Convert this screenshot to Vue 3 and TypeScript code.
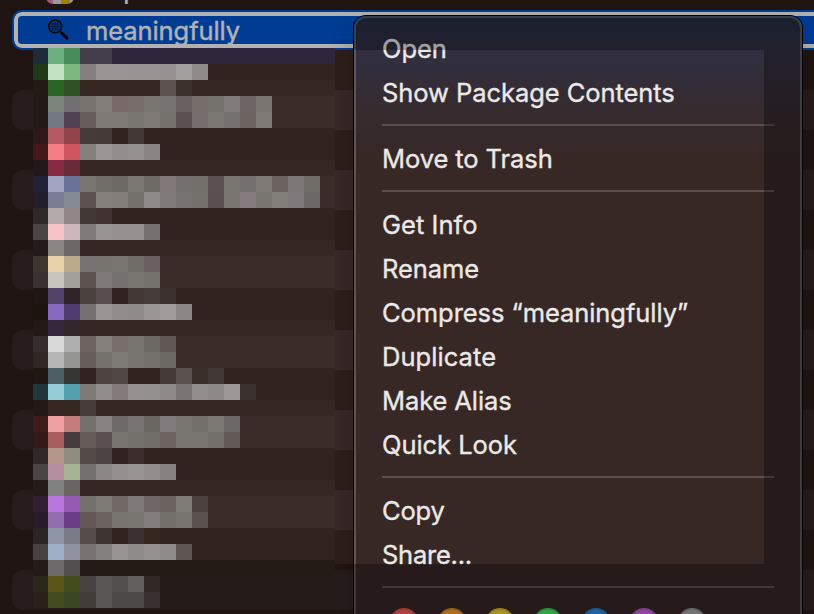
<script setup lang="ts">
interface MenuItem {
  label: string
  tracking: number
}

interface MosaicRow {
  base: string
  cells: string[]
}

const rows = Array.from({ length: 14 }, (_, i) => ({ striped: i % 2 === 1 }))

const groups: MenuItem[][] = [
  [
    { label: 'Open', tracking: -0.1 },
    { label: 'Show Package Contents', tracking: -0.06 },
  ],
  [{ label: 'Move to Trash', tracking: -0.08 }],
  [
    { label: 'Get Info', tracking: 0.04 },
    { label: 'Rename', tracking: -0.1 },
    { label: 'Compress “meaningfully”', tracking: -0.06 },
    { label: 'Duplicate', tracking: 0.06 },
    { label: 'Make Alias', tracking: -0.1 },
    { label: 'Quick Look', tracking: -0.05 },
  ],
  [
    { label: 'Copy', tracking: -0.2 },
    { label: 'Share...', tracking: -0.25 },
  ],
]

const tags = ['red', 'orange', 'yellow', 'green', 'blue', 'purple', 'gray']

// Each line: row base colour, then cell colours from the left; "-" leaves the base visible.
const mosaicSource = `
2f263e 1e2b3b 6daf80 478c59 433e4a 433e4a
32231f 1f3918 c2e2c3 7bb77e 858080 9a9594 9a9594 989392 999493 979291 a29e9d 908c8a
372723 231a16 2b6526 305025 - - - - - 5d5452 3c312d
3b2b29 231a18 7b857b 716f71 797370 827d79 786a69 786d6a 7a7672 767270 696060 776d6b 74726c 817b7b 6e6463 7c7673
3b2b29 231a18 727982 4f4052 675d5b 7f7a75 7e7974 7a7671 7f7a76 75716d 5c5150 766c6b 7b7773 75716e 6d6361 7f7a75
32221f 2f1819 b35a62 93434a 453c39 433a38 - 433836
32221f 46171a f48086 ce545e 84807e 9c9796 928e8c 959190 888482
352622 231819 872b43 692b3a
3b2b29 222139 a2a5c1 69739a 7a7473 716d69 6d6965 7b7772 6e6b67 807879 74706d 736f6b 5c5150 7a7671 74706d 7e7975 6c6260 7e7778 706d69
3b2b29 231e2b 777e95 858b93 5d5250 85807b 827d78 74706c 8e8a88 817a7b 76726f 74706c 5b504f 7b7672 847c7e 797571 817d78 7f787a 6c6865
32221f 2e2926 b5aaaa 928686 423936 413331
32221f 494543 f6c1c7 ccb8bb 7e7b78 979392 959190 959190 767070
352622 231b19 8a8684 6d6666
3b2b29 3f362f e8d2ac baab8b 787272 77736f 7a7671 706d69 6b605f
3b2b29 3a3230 c8c4be a2a09a 5d5250 7f7979 75716e 7a7671 75716d
32221f 201714 53426a 312429 4b4240 594e4d - 423936 463d3b 3c312f
32221f 1e140f 8769c0 503c70 777070 9a9594 918d8c 8e8b89 9b9796 a19c9b 8c8786
352622 231816 37273e 33262a
3b2b29 352d2b dadada afafaf 6e6361 85807b 7a6e6c 787470 6c6864 605654
3b2b29 312725 b6b6b6 949492 675d5b 75716d 7d7974 787470 74706c 6b6864
32221f 201612 4d5f65 363734 - 4d4442 524947 - - 433a37 5b5250 3a2e2a 423835
32221f 1f363b 95cbd6 54a0af 7d7977 918d8b 837b7b 959190 939190 8e8a88 7b7474 928e8c 8c8886 9d9897 3c3230
352622 231816 - - 483d3a
3b2b29 3f1b19 f1a0a0 c47c7c 74706c 898282 6f6b68 787471 6a6662 827b7d 797571 736f6b 7c7874 6c6865
3b2b29 331917 a85c5b 473c3e 645a58 5b504f 787470 74706c 716d69 6e6361 7a7672 7a7672 736f6b 635957
32221f 302726 b69689 8f8c80 544a48 4d4343 - 3a2d2b
32221f 494543 b58fa0 a7b493 757070 8b8785 94908f 979392 928e8d 858280
352622 251b19 828282 6a6463
3b2b29 331f33 b977dd 965bb2 74716d 7e7a75 726866 7f7979 706665 6c6260 7f7b76 4b403e
3b2b29 2a1b2a 926eb0 6a3b87 625957 6b615f 787470 7a7671 827c7d 736f6b 787470 5b5250
32221f 2b2624 8f95a9 797b87 554b49 3e3432 - 3b3231 35261f
32221f 454240 9eafc9 9092a0 777170 84807e 979391 908c8a 959190 908c8a 5f5654
251b16 231b18 6e6c6b 51504e
251b19 2b2819 5b5519 424c1d 474241 595655 524f4d 635f5e 312725
251b19 2a2019 434b1e 3a4624 433d3a 595655 4c4a48 4c4a48 383130`

const mosaic: MosaicRow[] = mosaicSource
  .trim()
  .split('\n')
  .map((line) => {
    const [base, ...cells] = line.split(' ')
    return {
      base: '#' + base,
      cells: cells.map((c) => (c === '-' ? 'transparent' : '#' + c)),
    }
  })
</script>

<template>
  <main class="window">
    <section class="list">
      <div class="row first">
        <span class="app-icon"></span>
        <span class="name">Maps</span>
      </div>
      <div class="row selected">
        <svg class="glass" viewBox="0 0 24 24" width="24" height="24" fill="none">
          <path d="M12.6 12.8 L15.5 15.7" stroke="#000" stroke-width="1.8" />
          <path d="M15.4 15.6 L20 20" stroke="#000" stroke-width="3" stroke-linecap="round" />
          <circle cx="8.2" cy="8.4" r="6.4" fill="#0a52b8" stroke="#000" stroke-width="1.5" />
          <path
            d="M5.8 4.4v8M8.2 3.6v9.6M10.6 4.4v8M4.2 6h8M3.4 8.4h9.6M4.2 10.8h8"
            stroke="#06203f"
            stroke-width="0.7"
          />
        </svg>
        <span class="name">meaningfully</span>
      </div>
      <div v-for="(row, i) in rows" :key="i" class="row" :class="{ striped: row.striped }"></div>
    </section>

    <nav class="menu">
      <template v-for="(group, g) in groups" :key="g">
        <ul class="group">
          <li v-for="item in group" :key="item.label" class="item">
            <span :style="{ letterSpacing: item.tracking + 'px' }">{{ item.label }}</span>
          </li>
        </ul>
        <div class="separator"></div>
      </template>
      <div class="tags">
        <span v-for="tag in tags" :key="tag" class="tag" :class="tag"></span>
      </div>
    </nav>

    <div class="spotlight"></div>

    <div class="mosaic">
      <div v-for="(line, i) in mosaic" :key="i" class="line" :style="{ background: line.base }">
        <i v-for="(cell, j) in line.cells" :key="j" :style="{ background: cell }"></i>
      </div>
    </div>
  </main>
</template>

<style>
body {
  background: #1f1410;
  overflow: hidden;
}
</style>

<style scoped>
.window {
  position: relative;
  width: 814px;
  height: 614px;
  overflow: hidden;
  background: #2d1e19;
  font-family: Inter, 'Liberation Sans', sans-serif;
  font-size: 25.5px;
  -webkit-text-stroke: 0.35px currentColor;
}

.list {
  display: flex;
  flex-direction: column;
  margin-top: -30px;
  padding-left: 12px;
}

.row {
  display: flex;
  flex: none;
  align-items: center;
  box-sizing: border-box;
  height: 40px;
  width: 860px;
  border-radius: 10px;
  color: #fff;
}

.row.striped {
  background: #382927;
}

.row.selected {
  background: #0057d5;
  border: 2px solid #0057d5;
  box-shadow: inset 0 0 0 4px #fff;
  padding-left: 33px;
}

.row.first {
  padding-left: 34px;
}

.app-icon {
  width: 28px;
  height: 28px;
  border-radius: 7px;
  background: linear-gradient(90deg, #e87bb8 0 25%, #ddd 25% 55%, #e8b800 55% 85%, #ddd 85%);
}

.glass {
  flex: none;
  margin-right: 15px;
}

.name {
  line-height: 40px;
}

.selected .name {
  padding-top: 2px;
  letter-spacing: -0.08px;
}

.first .name {
  margin-left: 12px;
}

.menu {
  position: absolute;
  left: 354px;
  top: 16px;
  box-sizing: border-box;
  width: 448px;
  height: 640px;
  padding: 9px 26px 0;
  border: 2px solid rgba(255, 255, 255, 0.2);
  border-radius: 12px;
  background: linear-gradient(#253045 0, #302f41 34px, #362b2f 94px, #372826 144px) border-box;
  box-shadow: 0 0 0 1px #000, 0 10px 30px rgba(0, 0, 0, 0.2);
  color: #ebe9e8;
}

.group {
  margin: 0;
  padding: 0;
  list-style: none;
}

.item {
  height: 44px;
  line-height: 44px;
  white-space: nowrap;
}

.separator {
  height: 2px;
  margin: 9px 0 11px;
  background: #5b4e4c;
}

.tags {
  display: flex;
  gap: 20px;
  padding: 9px 8px 0;
}

.tag {
  box-sizing: border-box;
  width: 28px;
  height: 28px;
  border-radius: 50%;
  border: 2px solid rgba(0, 0, 0, 0.12);
}

.red { background: #fd5e57; }
.orange { background: #f9a125; }
.yellow { background: #f5d52c; }
.green { background: #45f066; }
.blue { background: #2e90ef; }
.purple { background: #d167e8; }
.gray { background: #aaa8a8; }

.spotlight {
  position: absolute;
  left: 33px;
  top: 50px;
  width: 731px;
  height: 514px;
  box-shadow: 0 0 0 800px rgba(0, 0, 0, 0.3);
}

.mosaic {
  position: absolute;
  left: 33px;
  top: 48px;
  width: 302px;
}

.line {
  display: grid;
  grid-template-columns: 15px repeat(17, 16px) 15px;
  height: 16px;
}
</style>
